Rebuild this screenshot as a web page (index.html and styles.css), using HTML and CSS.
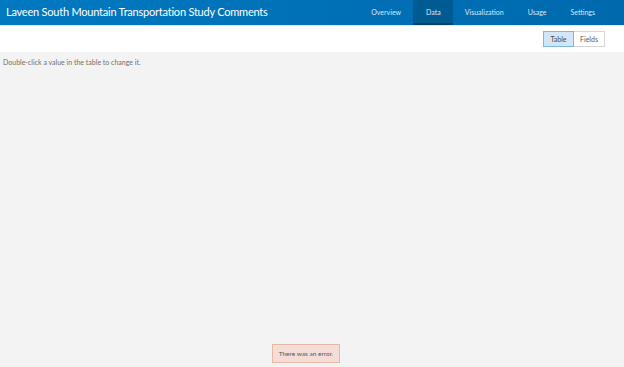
FILE: index.html
```html
<!DOCTYPE html>
<html>
<head>
<meta charset="utf-8">
<link rel="stylesheet" href="styles.css">
</head>
<body>
<header class="topbar">
  <div class="title">Laveen South Mountain Transportation Study Comments</div>
  <nav class="nav">
    <a class="tab">Overview</a>
    <a class="tab active">Data</a>
    <a class="tab">Visualization</a>
    <a class="tab">Usage</a>
    <a class="tab">Settings</a>
  </nav>
</header>
<div class="toolbar">
  <div class="seg">
    <button class="segbtn on">Table</button>
    <button class="segbtn">Fields</button>
  </div>
</div>
<main class="content">
  <p class="hint">Double-click a value in the table to change it.</p>
  <div class="toast">There was an error.</div>
</main>
</body>
</html>
```
FILE: styles.css
```css
* { box-sizing: border-box; }
html, body { margin: 0; height: 100%; }
body {
  font-family: Lato, "Open Sans", sans-serif;
  background: #f3f3f3;
  display: flex;
  flex-direction: column;
  color: #595959;
}
.topbar {
  height: 26px;
  background: linear-gradient(to right, #0079c1, #0069ad);
  display: flex;
  align-items: stretch;
  justify-content: space-between;
  border-bottom: 1px solid #e8e8e8;
}
.title {
  color: #fff;
  font-size: 11px;
  letter-spacing: -0.22px;
  padding-left: 6px;
  display: flex;
  align-items: center;
  padding-bottom: 2px;
}
.nav { display: flex; padding-right: 17px; }
.tab {
  color: #dbe9f4;
  font-size: 7px;
  display: flex;
  align-items: center;
  padding: 0 12px 2px;
}
.tab.active {
  background: #005b93;
  border-bottom: 2px solid #003f66;
  padding-bottom: 0;
  padding-left: 13px;
}
.toolbar {
  height: 26px;
  background: #fff;
  display: flex;
  justify-content: flex-end;
  align-items: flex-start;
  padding: 5px 19px 0 0;
}
.seg { display: flex; }
.segbtn {
  font-family: inherit;
  font-size: 7px;
  height: 16px;
  padding: 0 6px;
  color: #595959;
  background: #fff;
  border: 1px solid #d6d6d6;
  margin: 0;
}
.segbtn.on {
  background: #d2e6f5;
  border-color: #7ab8e2;
  color: #4c4c4c;
  width: 31px;
}
.segbtn + .segbtn { border-left: none; width: 31px; }
.content {
  flex: 1;
  display: flex;
  flex-direction: column;
  align-items: center;
  padding-bottom: 4px;
}
.hint {
  align-self: flex-start;
  margin: 6px 0 0 3px;
  font-size: 7px;
  color: #6e6e6e;
}
.toast {
  margin-top: auto;
  margin-right: 12px;
  font-size: 6.5px;
  color: #595959;
  background: #f3ddd6;
  border: 1px solid #e7b7a6;
  padding: 5px 6px;
}
```
